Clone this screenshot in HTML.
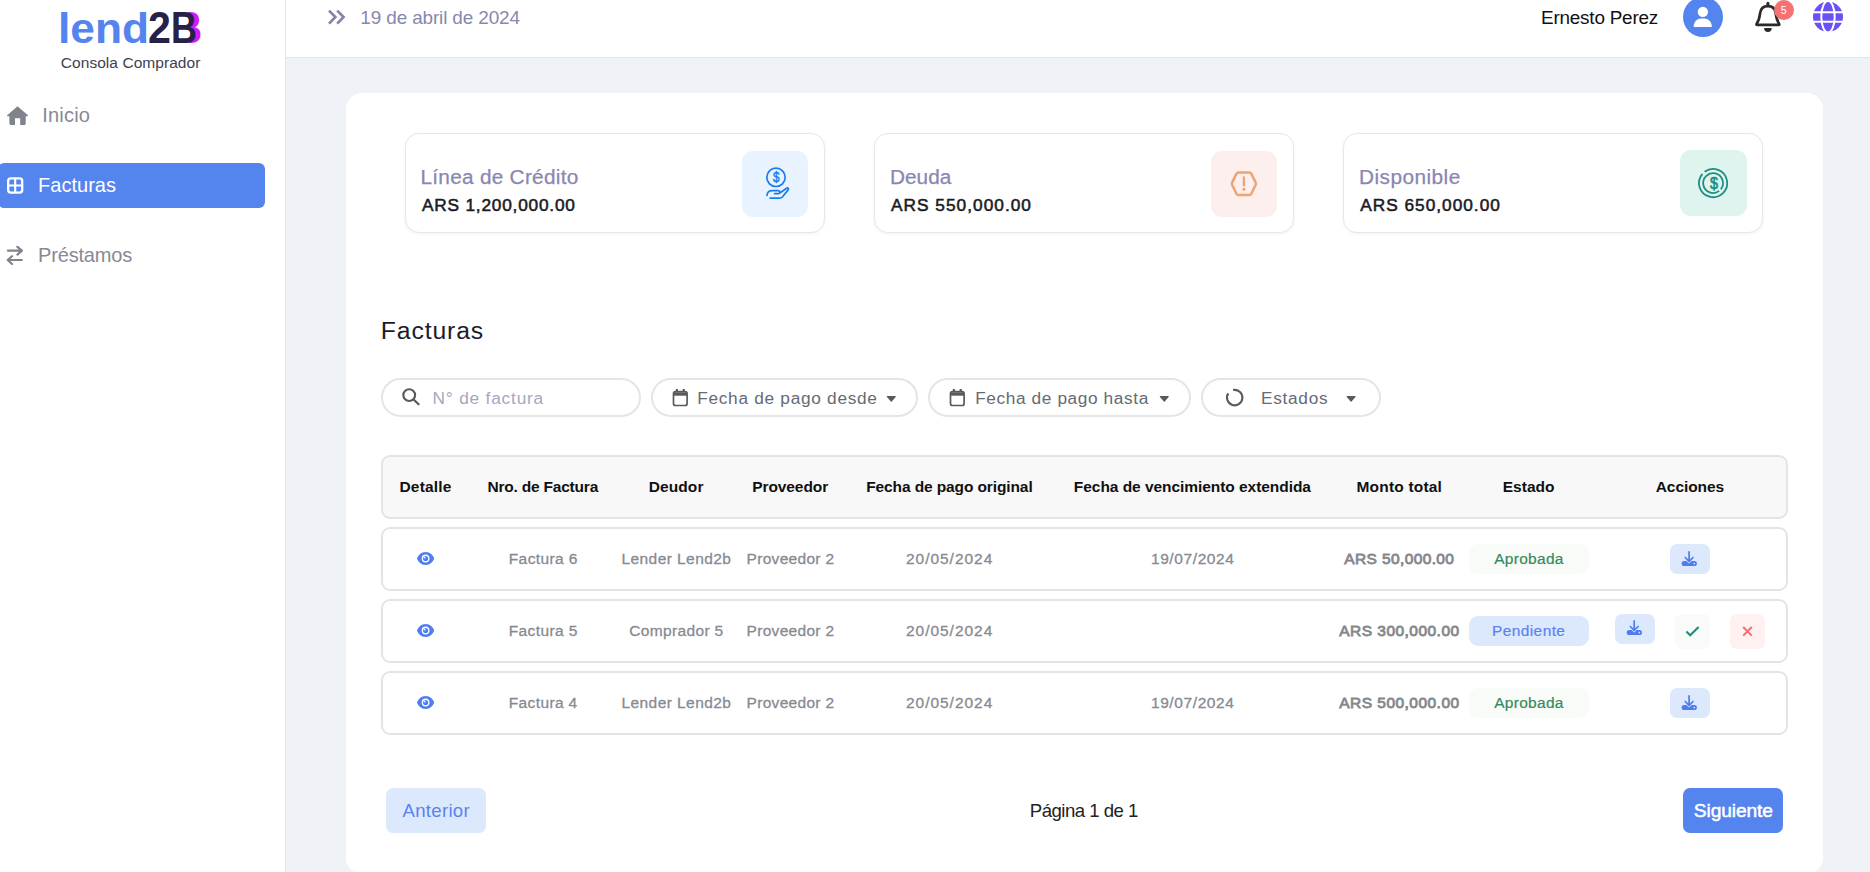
<!DOCTYPE html>
<html lang="es"><head><meta charset="utf-8"><title>lend2B - Consola Comprador</title>
<style>
html,body{margin:0;padding:0}
body{width:1870px;height:872px;overflow:hidden;position:relative;background:#eff3f8;font-family:"Liberation Sans",sans-serif}
div,svg,.t{position:absolute;box-sizing:content-box}
.t{white-space:pre;line-height:1;margin:0}
h1,h2{margin:0;font-size:inherit;font-weight:inherit}
svg{overflow:visible}
</style></head>
<body>
<aside>
<div style="left:0px;top:0px;width:285px;height:872px;background:#fff;border-right:1px solid #e4e6ee"></div>
<h1><span class="t" style="left:57.81px;top:7.60px;font-size:41.82px;letter-spacing:0.000px;color:#5484ee;font-weight:700;transform:scaleX(1.0588);transform-origin:0 0;">lend</span><span class="t" style="left:175.69px;top:5.60px;font-size:44.04px;letter-spacing:0.000px;color:#d61af5;font-weight:700;clip-path:inset(0 0 0 48%);transform:scaleX(0.8189);transform-origin:0 0;">B</span><span class="t" style="left:148.37px;top:5.60px;font-size:44.16px;letter-spacing:0.000px;color:#272047;font-weight:700;transform:scaleX(0.9312);transform-origin:0 0;">2</span><span class="t" style="left:170.99px;top:5.60px;font-size:44.04px;letter-spacing:0.000px;color:#272047;font-weight:700;transform:scaleX(0.8189);transform-origin:0 0;">B</span></h1>
<span class="t" style="left:60.81px;top:54.80px;font-size:15.50px;letter-spacing:0.052px;color:#40404f;">Consola Comprador</span>
<nav>
<svg style="left:7px;top:106px" width="23" height="21" viewBox="0 0 23 21" ><path fill="#80838b" d="M10.5 0.2 L20.9 9.2 Q21.5 9.9 20.6 10.2 L18.7 10.2 L18.7 17.6 Q18.7 18.9 17.4 18.9 L13.2 18.9 L13.2 12.2 L8 12.2 L8 18.9 L3.7 18.9 Q2.4 18.9 2.4 17.6 L2.4 10.2 L0.4 10.2 Q-0.4 9.9 0.2 9.2 Z"/></svg><span class="t" style="left:42.15px;top:104.90px;font-size:20.06px;letter-spacing:0.216px;color:#878a92;">Inicio</span>
<div style="left:-2px;top:163px;width:267px;height:45px;background:#5484ee;border-radius:6px"></div>
<svg style="left:7px;top:177px" width="18" height="18" viewBox="0 0 18 18" ><g transform="translate(0 0.2)"><rect x="1.2" y="1.2" width="14" height="14.2" rx="2.6" fill="none" stroke="#fff" stroke-width="2.3"/><path d="M8.2 1.2V15.4M1.2 8.3H15.2" stroke="#fff" stroke-width="2.1" fill="none"/></g></svg><span class="t" style="left:38.05px;top:175.00px;font-size:20.06px;letter-spacing:-0.004px;color:#ffffff;">Facturas</span>
<svg style="left:6px;top:246px" width="18" height="20" viewBox="0 0 18 20" ><g transform="translate(0.6 0)"><g fill="none" stroke="#80838b" stroke-width="2.2" stroke-linecap="round" stroke-linejoin="round"><path d="M1.3 4.6H15M10.8 0.8L15.3 4.6L10.8 8.6"/><path d="M15.3 14H1.5M5.4 10.2L1.1 14L5.4 18"/></g></g></svg><span class="t" style="left:38.05px;top:244.90px;font-size:20.06px;letter-spacing:-0.193px;color:#878a92;">Préstamos</span>
</nav></aside>
<header>
<div style="left:286px;top:0px;width:1584px;height:57px;background:#fff;border-bottom:1px solid #e4e6ee"></div>
<svg style="left:328px;top:9px" width="19" height="17" viewBox="0 0 19 17" ><g transform="translate(0 0.4)"><g fill="none" stroke="#8183a9" stroke-width="2.6" stroke-linejoin="miter"><path d="M1 1.2L7.4 7.6L1 14.2"/><path d="M9.2 1.2L15.6 7.6L9.2 14.2"/></g></g></svg><span class="t" style="left:360.36px;top:8.90px;font-size:18.91px;letter-spacing:-0.128px;color:#8688ad;">19 de abril de 2024</span>
<span class="t" style="left:1541.05px;top:8.70px;font-size:18.90px;letter-spacing:-0.209px;color:#111111;">Ernesto Perez</span>
<div style="left:1683px;top:-3px;width:40px;height:40px;background:#5484ee;border-radius:50%"></div>
<svg style="left:1693px;top:6px" width="19.4" height="22" viewBox="0 0 19.4 22" ><g transform="translate(0.6 0.5)"><circle cx="9.25" cy="5.4" r="5.17" fill="#fff"/><path fill="#fff" d="M0.6 20.5 C0.2 20.5 0 20.2 0 19.8 C0.3 15.2 3.6 12 7.6 12 L10.7 12 C14.7 12 18 15.2 18.3 19.8 C18.3 20.2 18.1 20.5 17.7 20.5 Z"/></g></svg>
<svg style="left:1755px;top:1px" width="27" height="32" viewBox="0 0 27 32" ><g transform="translate(0 0.6)"><g stroke="#2a2a2a" stroke-width="2.7" stroke-linejoin="round" stroke-linecap="round" fill="none"><path d="M12.9 4.5 C8.2 4.5 5.6 7.6 5.1 11.6 C4.6 16 3.8 19.2 1.6 22.4 Q1.2 23.3 2.2 23.3 L23.6 23.3 Q24.6 23.3 24.2 22.4 C22 19.2 21.2 16 20.7 11.6 C20.2 7.6 17.6 4.5 12.9 4.5 Z"/><path d="M12.9 1.7V3.4" stroke-width="3"/></g><path fill="#2a2a2a" d="M9.1 26.4 h7.6 a3.8 3.9 0 0 1 -7.6 0z"/></g></svg>
<div style="left:1774.2px;top:-0.2px;width:20px;height:20px;background:#f47272;border-radius:50%"></div>
<span class="t" style="left:1780.78px;top:4.70px;font-size:10.61px;letter-spacing:0.864px;color:#ffffff;">5</span>
<svg style="left:1813px;top:1px" width="31" height="32" viewBox="0 0 31 32" ><g transform="translate(0 0.6)"><circle cx="15" cy="15.2" r="15" fill="#6852f3"/><g fill="none" stroke="#fff" stroke-width="2"><ellipse cx="15" cy="15.2" rx="6.7" ry="15.8"/><path d="M0 10.6H30M0 20.1H30"/></g></g></svg>
</header>
<main>
<div style="left:346px;top:93px;width:1477px;height:781px;background:#fff;border-radius:16px"></div>
<section>
<div style="left:405px;top:133px;width:418px;height:98px;background:#fff;border:1px solid #e6e7ee;border-radius:14px;box-shadow:0 1px 3px rgba(40,40,80,.06)"></div>
<span class="t" style="left:420.49px;top:166.60px;font-size:20.79px;letter-spacing:0.274px;color:#8987b0;-webkit-text-stroke:0.25px #8987b0;">Línea de Crédito</span><span class="t" style="left:421.97px;top:196.60px;font-size:17.25px;letter-spacing:0.795px;color:#1b1b1f;-webkit-text-stroke:0.55px #1b1b1f;">ARS 1,200,000.00</span>
<div style="left:742px;top:151px;width:66px;height:66px;background:#e9f3ff;border-radius:11px"></div>
<svg style="left:764px;top:167px" width="27" height="35" viewBox="0 0 27 35" ><g transform="translate(0.8 0.1)"><g fill="none" stroke="#1a7cf0" stroke-width="1.7" stroke-linecap="round" stroke-linejoin="round"><circle cx="11.2" cy="10.2" r="9.2"/><path d="M2.2 28.4 C2.4 25.2 4.6 23.6 7.4 23.6 L13.4 23.6 C15.7 23.8 15.7 26.4 13.4 26.6 L9.8 26.6 M15.4 25.6 L21.8 21.1 C23.3 20.1 24.3 21.8 23.2 23 L17.5 29.9 C16.8 30.7 16 31.1 14.8 31.1 L5.4 31.1"/></g></g></svg>
<span class="t" style="left:772.97px;top:170.08px;font-size:14.70px;letter-spacing:0.000px;color:#1a7cf0;-webkit-text-stroke:0.5px #1a7cf0;transform:scaleX(0.7972);transform-origin:0 0;">$</span>
</section>
<section>
<div style="left:874px;top:133px;width:418px;height:98px;background:#fff;border:1px solid #e6e7ee;border-radius:14px;box-shadow:0 1px 3px rgba(40,40,80,.06)"></div>
<span class="t" style="left:889.89px;top:166.60px;font-size:20.79px;letter-spacing:0.064px;color:#8987b0;-webkit-text-stroke:0.25px #8987b0;">Deuda</span><span class="t" style="left:890.97px;top:196.60px;font-size:17.25px;letter-spacing:1.031px;color:#1b1b1f;-webkit-text-stroke:0.55px #1b1b1f;">ARS 550,000.00</span>
<div style="left:1211px;top:151px;width:66px;height:66px;background:#fdefee;border-radius:11px"></div>
<svg style="left:1230px;top:170px" width="28" height="27" viewBox="0 0 28 27" ><g transform="translate(0.4 0.8)"><g fill="none" stroke="#eba573" stroke-width="2.5" stroke-linecap="round" stroke-linejoin="round"><path d="M8.2 1.6H18.8Q20.2 1.6 20.9 2.8L25.2 11.6Q25.8 12.9 25.2 14.2L20.9 23Q20.2 24.2 18.8 24.2H8.2Q6.8 24.2 6.1 23L1.8 14.2Q1.2 12.9 1.8 11.6L6.1 2.8Q6.8 1.6 8.2 1.6Z"/><path d="M13.5 6.6V14.6" stroke-width="2.3"/></g><circle cx="13.5" cy="18.4" r="1.5" fill="#eba573"/></g></svg>
</section>
<section>
<div style="left:1343px;top:133px;width:418px;height:98px;background:#fff;border:1px solid #e6e7ee;border-radius:14px;box-shadow:0 1px 3px rgba(40,40,80,.06)"></div>
<span class="t" style="left:1358.99px;top:166.60px;font-size:20.79px;letter-spacing:0.465px;color:#8987b0;-webkit-text-stroke:0.25px #8987b0;">Disponible</span><span class="t" style="left:1360.17px;top:196.60px;font-size:17.25px;letter-spacing:1.008px;color:#1b1b1f;-webkit-text-stroke:0.55px #1b1b1f;">ARS 650,000.00</span>
<div style="left:1680px;top:150px;width:67px;height:66px;background:#dff4ee;border-radius:11px"></div>
<svg style="left:1697px;top:167px" width="33" height="33" viewBox="0 0 33 33" ><g transform="translate(0.1 0.1)"><g fill="none" stroke="#1b8f7f" stroke-width="1.8"><path d="M7.51 4.74 A14.10 14.10 0 1 1 5.36 6.75"/><path d="M22.10 23.80 A9.90 9.90 0 1 1 23.69 22.23"/></g></g></svg>
<span class="t" style="left:1709.55px;top:174.81px;font-size:17.17px;letter-spacing:0.000px;color:#1b8f7f;-webkit-text-stroke:0.7px #1b8f7f;transform:scaleX(0.8365);transform-origin:0 0;">$</span>
</section>
<h2><span class="t" style="left:380.87px;top:318.70px;font-size:24.75px;letter-spacing:0.863px;color:#1c1c28;">Facturas</span></h2>
<div style="left:381px;top:378px;width:256px;height:35px;border:2px solid #e3e5eb;border-radius:20px;background:#fff"></div>
<svg style="left:402px;top:388px" width="19" height="19" viewBox="0 0 19 19" ><g fill="none" stroke="#5a5a5a" stroke-width="2.15" stroke-linecap="round"><circle cx="7.2" cy="7.1" r="5.9"/><path d="M11.6 11.4L16.6 16.3"/></g></svg>
<span class="t" style="left:432.58px;top:389.70px;font-size:17.25px;letter-spacing:0.812px;color:#a5a8c0;">N° de factura</span>
<div style="left:651px;top:378px;width:263px;height:35px;border:2px solid #e3e5eb;border-radius:20px;background:#fff"></div>
<svg style="left:672px;top:388px" width="17" height="19" viewBox="0 0 17 19" ><g transform="translate(0.6 0.8)"><g fill="none" stroke="#5a5a5a"><rect x="0.9" y="2.9" width="13.6" height="13.8" rx="2" stroke-width="1.7"/><path d="M1 5.2H14.4" stroke-width="3.4"/><path d="M4.3 0.3V3M11.1 0.3V3" stroke-width="2.2"/></g></g></svg>
<span class="t" style="left:697.18px;top:389.60px;font-size:17.25px;letter-spacing:0.716px;color:#666a73;">Fecha de pago desde</span>
<svg style="left:886px;top:395px" width="11" height="8" viewBox="0 0 11 8" ><g transform="translate(0.4 0.6)"><path fill="#5a5a5a" stroke="#5a5a5a" stroke-width="1.2" stroke-linejoin="round" d="M1 0.9H8.8L4.9 5.4Z"/></g></svg>
<div style="left:928px;top:378px;width:259px;height:35px;border:2px solid #e3e5eb;border-radius:20px;background:#fff"></div>
<svg style="left:949px;top:388px" width="17" height="19" viewBox="0 0 17 19" ><g transform="translate(0.6 0.8)"><g fill="none" stroke="#5a5a5a"><rect x="0.9" y="2.9" width="13.6" height="13.8" rx="2" stroke-width="1.7"/><path d="M1 5.2H14.4" stroke-width="3.4"/><path d="M4.3 0.3V3M11.1 0.3V3" stroke-width="2.2"/></g></g></svg>
<span class="t" style="left:975.18px;top:389.60px;font-size:17.25px;letter-spacing:0.612px;color:#666a73;">Fecha de pago hasta</span>
<svg style="left:1159px;top:395px" width="11" height="8" viewBox="0 0 11 8" ><g transform="translate(0.4 0.6)"><path fill="#5a5a5a" stroke="#5a5a5a" stroke-width="1.2" stroke-linejoin="round" d="M1 0.9H8.8L4.9 5.4Z"/></g></svg>
<div style="left:1201px;top:378px;width:176px;height:35px;border:2px solid #e3e5eb;border-radius:20px;background:#fff"></div>
<svg style="left:1225px;top:388px" width="19" height="19" viewBox="0 0 19 19" ><g transform="translate(0.6 0.6)"><path fill="none" stroke="#5a5a5a" stroke-width="2.1" d="M7.50 1.47 A7.70 7.70 0 1 1 2.64 4.81"/></g></svg>
<span class="t" style="left:1260.98px;top:389.60px;font-size:17.25px;letter-spacing:0.716px;color:#666a73;">Estados</span>
<svg style="left:1346px;top:395px" width="11" height="8" viewBox="0 0 11 8" ><g transform="translate(0.2 0.6)"><path fill="#5a5a5a" stroke="#5a5a5a" stroke-width="1.2" stroke-linejoin="round" d="M1 0.9H8.8L4.9 5.4Z"/></g></svg>
<div class="table">
<div style="left:381px;top:455px;width:1403px;height:60px;border:2px solid #e3e4ea;border-radius:9px;background:#f8f8f9"></div>
<span class="t" style="left:399.46px;top:479.10px;font-size:15.50px;letter-spacing:0.187px;color:#101010;font-weight:700;">Detalle</span><span class="t" style="left:487.46px;top:479.10px;font-size:15.50px;letter-spacing:-0.205px;color:#101010;font-weight:700;">Nro. de Factura</span><span class="t" style="left:648.76px;top:479.10px;font-size:15.50px;letter-spacing:0.084px;color:#101010;font-weight:700;">Deudor</span><span class="t" style="left:752.16px;top:479.10px;font-size:15.50px;letter-spacing:-0.075px;color:#101010;font-weight:700;">Proveedor</span><span class="t" style="left:866.26px;top:479.10px;font-size:15.50px;letter-spacing:-0.113px;color:#101010;font-weight:700;">Fecha de pago original</span><span class="t" style="left:1073.86px;top:479.10px;font-size:15.50px;letter-spacing:-0.051px;color:#101010;font-weight:700;">Fecha de vencimiento extendida</span><span class="t" style="left:1356.46px;top:479.10px;font-size:15.50px;letter-spacing:0.192px;color:#101010;font-weight:700;">Monto total</span><span class="t" style="left:1502.76px;top:479.10px;font-size:15.50px;letter-spacing:0.011px;color:#101010;font-weight:700;">Estado</span><span class="t" style="left:1655.71px;top:479.10px;font-size:15.50px;letter-spacing:-0.071px;color:#101010;font-weight:700;">Acciones</span>
<div class="tr">
<div style="left:381px;top:527px;width:1403px;height:60px;border:2px solid #e3e4ea;border-radius:9px;background:#fff"></div>
<svg style="left:417px;top:552px" width="18" height="14" viewBox="0 0 18 14" ><g transform="translate(0.1 0.1)"><path fill="#4f7df0" d="M8.5 0 C13 0 16 3.6 16.9 6 Q17 6.4 16.9 6.8 C16 9.2 13 12.8 8.5 12.8 C4 12.8 1 9.2 0.1 6.8 Q0 6.4 0.1 6 C1 3.6 4 0 8.5 0Z"/><circle cx="8.5" cy="6.4" r="3.9" fill="#fff"/><circle cx="8.5" cy="6.4" r="2.6" fill="#4f7df0"/><circle cx="7.5" cy="5.4" r="1" fill="#fff"/></g></svg>
<div style="left:1469px;top:544px;width:120px;height:30px;background:#f8fbf8;border-radius:9px"></div>
<span class="t" style="left:508.73px;top:551.00px;font-size:15.50px;letter-spacing:0.409px;color:#878a92;-webkit-text-stroke:0.3px #878a92;">Factura 6</span><span class="t" style="left:621.43px;top:551.00px;font-size:15.50px;letter-spacing:0.435px;color:#878a92;-webkit-text-stroke:0.3px #878a92;">Lender Lend2b</span><span class="t" style="left:746.53px;top:551.00px;font-size:15.50px;letter-spacing:0.310px;color:#878a92;-webkit-text-stroke:0.3px #878a92;">Proveedor 2</span><span class="t" style="left:906.02px;top:551.00px;font-size:15.50px;letter-spacing:0.962px;color:#878a92;-webkit-text-stroke:0.3px #878a92;">20/05/2024</span><span class="t" style="left:1150.92px;top:551.00px;font-size:15.50px;letter-spacing:0.606px;color:#878a92;-webkit-text-stroke:0.3px #878a92;">19/07/2024</span><span class="t" style="left:1344.27px;top:551.00px;font-size:15.50px;letter-spacing:0.383px;color:#85878c;-webkit-text-stroke:0.8px #85878c;">ARS 50,000.00</span><span class="t" style="left:1494.17px;top:551.00px;font-size:15.50px;letter-spacing:0.299px;color:#348a5c;-webkit-text-stroke:0.2px #348a5c;">Aprobada</span>
<div style="left:1670px;top:544px;width:40px;height:30px;background:#dce9fd;border-radius:7px"></div><svg style="left:1681px;top:550px" width="17" height="17" viewBox="0 0 17 17" ><g transform="translate(0.3 0.6)"><rect x="0.3" y="10.3" width="15.3" height="5.1" rx="2.55" fill="#4f7df0"/><circle cx="13" cy="12.9" r="0.85" fill="#dce9fd"/><path d="M4.6 7.4L7.8 10.6L11 7.4" fill="none" stroke="#dce9fd" stroke-width="3.4"/><g fill="none" stroke="#4f7df0" stroke-width="1.75" stroke-linecap="round" stroke-linejoin="round"><path d="M7.8 1.3V10.6"/><path d="M3.9 6.9L7.8 10.8L11.7 6.9"/></g></g></svg>
</div>
<div class="tr">
<div style="left:381px;top:599px;width:1403px;height:60px;border:2px solid #e3e4ea;border-radius:9px;background:#fff"></div>
<svg style="left:417px;top:624px" width="18" height="14" viewBox="0 0 18 14" ><g transform="translate(0.1 0.1)"><path fill="#4f7df0" d="M8.5 0 C13 0 16 3.6 16.9 6 Q17 6.4 16.9 6.8 C16 9.2 13 12.8 8.5 12.8 C4 12.8 1 9.2 0.1 6.8 Q0 6.4 0.1 6 C1 3.6 4 0 8.5 0Z"/><circle cx="8.5" cy="6.4" r="3.9" fill="#fff"/><circle cx="8.5" cy="6.4" r="2.6" fill="#4f7df0"/><circle cx="7.5" cy="5.4" r="1" fill="#fff"/></g></svg>
<div style="left:1469px;top:616px;width:120px;height:30px;background:#dce9fd;border-radius:9px"></div>
<span class="t" style="left:508.73px;top:623.00px;font-size:15.50px;letter-spacing:0.405px;color:#878a92;-webkit-text-stroke:0.3px #878a92;">Factura 5</span><span class="t" style="left:629.21px;top:623.00px;font-size:15.50px;letter-spacing:0.357px;color:#878a92;-webkit-text-stroke:0.3px #878a92;">Comprador 5</span><span class="t" style="left:746.53px;top:623.00px;font-size:15.50px;letter-spacing:0.310px;color:#878a92;-webkit-text-stroke:0.3px #878a92;">Proveedor 2</span><span class="t" style="left:906.02px;top:623.00px;font-size:15.50px;letter-spacing:0.962px;color:#878a92;-webkit-text-stroke:0.3px #878a92;">20/05/2024</span><span class="t" style="left:1339.27px;top:623.00px;font-size:15.50px;letter-spacing:0.467px;color:#85878c;-webkit-text-stroke:0.8px #85878c;">ARS 300,000.00</span><span class="t" style="left:1492.03px;top:623.00px;font-size:15.50px;letter-spacing:0.393px;color:#5b82f0;-webkit-text-stroke:0.2px #5b82f0;">Pendiente</span>
<div style="left:1615px;top:614px;width:40px;height:30px;background:#dce9fd;border-radius:7px"></div><svg style="left:1626px;top:619px" width="17" height="17" viewBox="0 0 17 17" ><g transform="translate(0.4 0.6)"><rect x="0.3" y="10.3" width="15.3" height="5.1" rx="2.55" fill="#4f7df0"/><circle cx="13" cy="12.9" r="0.85" fill="#dce9fd"/><path d="M4.6 7.4L7.8 10.6L11 7.4" fill="none" stroke="#dce9fd" stroke-width="3.4"/><g fill="none" stroke="#4f7df0" stroke-width="1.75" stroke-linecap="round" stroke-linejoin="round"><path d="M7.8 1.3V10.6"/><path d="M3.9 6.9L7.8 10.8L11.7 6.9"/></g></g></svg>
<div style="left:1675px;top:614px;width:35px;height:35px;background:#f8fbf8;border-radius:7px"></div><svg style="left:1685px;top:626px" width="16" height="12" viewBox="0 0 16 12" ><g transform="translate(0.2 0.2)"><path d="M1.2 5.2L5 9L13.4 0.9" fill="none" stroke="#1b8f7f" stroke-width="2.1"/></g></svg>
<div style="left:1730px;top:614px;width:35px;height:35px;background:#fef1f0;border-radius:7px"></div><svg style="left:1742px;top:626px" width="12" height="12" viewBox="0 0 12 12" ><g transform="translate(0.2 0)"><path d="M1 1L9.6 9.6M9.6 1L1 9.6" fill="none" stroke="#f96c6c" stroke-width="2"/></g></svg>
</div>
<div class="tr">
<div style="left:381px;top:671px;width:1403px;height:60px;border:2px solid #e3e4ea;border-radius:9px;background:#fff"></div>
<svg style="left:417px;top:696px" width="18" height="14" viewBox="0 0 18 14" ><g transform="translate(0.1 0.1)"><path fill="#4f7df0" d="M8.5 0 C13 0 16 3.6 16.9 6 Q17 6.4 16.9 6.8 C16 9.2 13 12.8 8.5 12.8 C4 12.8 1 9.2 0.1 6.8 Q0 6.4 0.1 6 C1 3.6 4 0 8.5 0Z"/><circle cx="8.5" cy="6.4" r="3.9" fill="#fff"/><circle cx="8.5" cy="6.4" r="2.6" fill="#4f7df0"/><circle cx="7.5" cy="5.4" r="1" fill="#fff"/></g></svg>
<div style="left:1469px;top:688px;width:120px;height:30px;background:#f8fbf8;border-radius:9px"></div>
<span class="t" style="left:508.73px;top:695.00px;font-size:15.50px;letter-spacing:0.380px;color:#878a92;-webkit-text-stroke:0.3px #878a92;">Factura 4</span><span class="t" style="left:621.43px;top:695.00px;font-size:15.50px;letter-spacing:0.435px;color:#878a92;-webkit-text-stroke:0.3px #878a92;">Lender Lend2b</span><span class="t" style="left:746.53px;top:695.00px;font-size:15.50px;letter-spacing:0.310px;color:#878a92;-webkit-text-stroke:0.3px #878a92;">Proveedor 2</span><span class="t" style="left:906.02px;top:695.00px;font-size:15.50px;letter-spacing:0.962px;color:#878a92;-webkit-text-stroke:0.3px #878a92;">20/05/2024</span><span class="t" style="left:1150.92px;top:695.00px;font-size:15.50px;letter-spacing:0.606px;color:#878a92;-webkit-text-stroke:0.3px #878a92;">19/07/2024</span><span class="t" style="left:1339.27px;top:695.00px;font-size:15.50px;letter-spacing:0.467px;color:#85878c;-webkit-text-stroke:0.8px #85878c;">ARS 500,000.00</span><span class="t" style="left:1494.17px;top:695.00px;font-size:15.50px;letter-spacing:0.299px;color:#348a5c;-webkit-text-stroke:0.2px #348a5c;">Aprobada</span>
<div style="left:1670px;top:688px;width:40px;height:30px;background:#dce9fd;border-radius:7px"></div><svg style="left:1681px;top:694px" width="17" height="17" viewBox="0 0 17 17" ><g transform="translate(0.3 0.6)"><rect x="0.3" y="10.3" width="15.3" height="5.1" rx="2.55" fill="#4f7df0"/><circle cx="13" cy="12.9" r="0.85" fill="#dce9fd"/><path d="M4.6 7.4L7.8 10.6L11 7.4" fill="none" stroke="#dce9fd" stroke-width="3.4"/><g fill="none" stroke="#4f7df0" stroke-width="1.75" stroke-linecap="round" stroke-linejoin="round"><path d="M7.8 1.3V10.6"/><path d="M3.9 6.9L7.8 10.8L11.7 6.9"/></g></g></svg>
</div>
</div>
<footer>
<div style="left:386px;top:788px;width:100px;height:45px;background:#dce9fd;border-radius:7px"></div>
<span class="t" style="left:402.46px;top:801.90px;font-size:18.60px;letter-spacing:0.305px;color:#5b82f0;">Anterior</span>
<span class="t" style="left:1029.77px;top:801.90px;font-size:18.60px;letter-spacing:-0.511px;color:#222222;">Página 1 de 1</span>
<div style="left:1683px;top:788px;width:100px;height:45px;background:#5484ee;border-radius:7px"></div>
<span class="t" style="left:1693.83px;top:801.10px;font-size:19.19px;letter-spacing:-0.111px;color:#ffffff;-webkit-text-stroke:0.5px #fff;">Siguiente</span>
</footer></main>
</body></html>
